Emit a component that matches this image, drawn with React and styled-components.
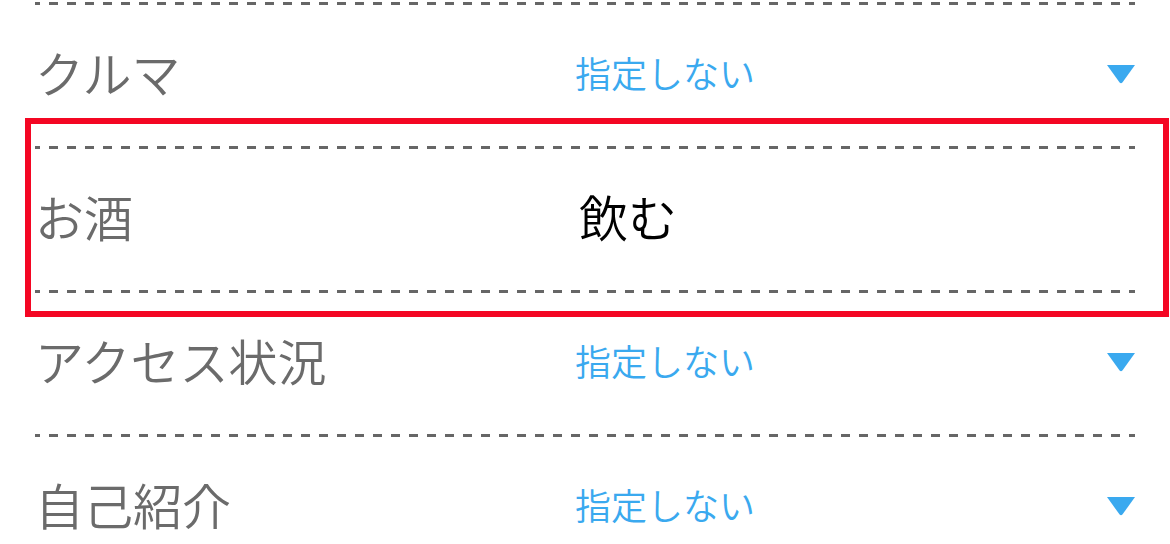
import React from 'react';
import styled, { createGlobalStyle } from 'styled-components';

const GlobalStyle = createGlobalStyle`
  html, body {
    margin: 0;
    padding: 0;
    background: #ffffff;
  }
  body {
    font-family: "Noto Sans CJK JP", "Noto Sans", sans-serif;
  }
`;

const List = styled.ul`
  list-style: none;
  margin: 2px 35px 0;
  padding: 0;
`;

// dashed separator drawn as a gradient so dash/gap are exactly 9px
const Row = styled.li`
  position: relative;
  display: flex;
  align-items: center;
  box-sizing: border-box;
  height: 144px;
  padding: 3px 0 8px;
  background-image: linear-gradient(to right, #666666 50%, transparent 50%);
  background-size: 18px 3px;
  background-repeat: repeat-x;
  background-position: -4px 0;
`;

const Label = styled.div`
  flex: 0 0 540px;
  color: #6b6b6b;
  font-size: 49px;
  font-weight: 350;
  line-height: 1;
`;

const Value = styled.div`
  flex: 1;
  color: ${(p) => (p.$filled ? '#000000' : '#3aa9ef')};
  font-size: ${(p) => (p.$filled ? '49px' : '36px')};
  font-weight: 350;
  line-height: 1;
  padding-left: ${(p) => (p.$filled ? '4px' : '0')};
`;

const Arrow = styled.svg`
  flex: 0 0 auto;
  width: 28px;
  height: 19px;
  margin-top: 6px;
`;

const Highlight = styled.div`
  position: absolute;
  top: -28px;
  bottom: -27px;
  left: -10px;
  right: -34px;
  border: 6px solid #f40623;
  pointer-events: none;
`;

const DropArrow = () => (
  <Arrow viewBox="0 0 28 19">
    <path d="M0 0 H28 L15.4 17.6 Q14 19 12.6 17.6 Z" fill="#3aa9ef" />
  </Arrow>
);

const rows = [
  { label: 'クルマ', value: '指定しない' },
  { label: 'お酒', value: '飲む', filled: true, active: true },
  { label: 'アクセス状況', value: '指定しない' },
  { label: '自己紹介', value: '指定しない' },
];

const App = () => {
  return (
    <>
      <GlobalStyle />
      <List>
        {rows.map((row) => (
          <Row key={row.label}>
            <Label>{row.label}</Label>
            <Value $filled={row.filled}>{row.value}</Value>
            {!row.filled && <DropArrow />}
            {row.active && <Highlight />}
          </Row>
        ))}
      </List>
    </>
  );
};

export default App;
